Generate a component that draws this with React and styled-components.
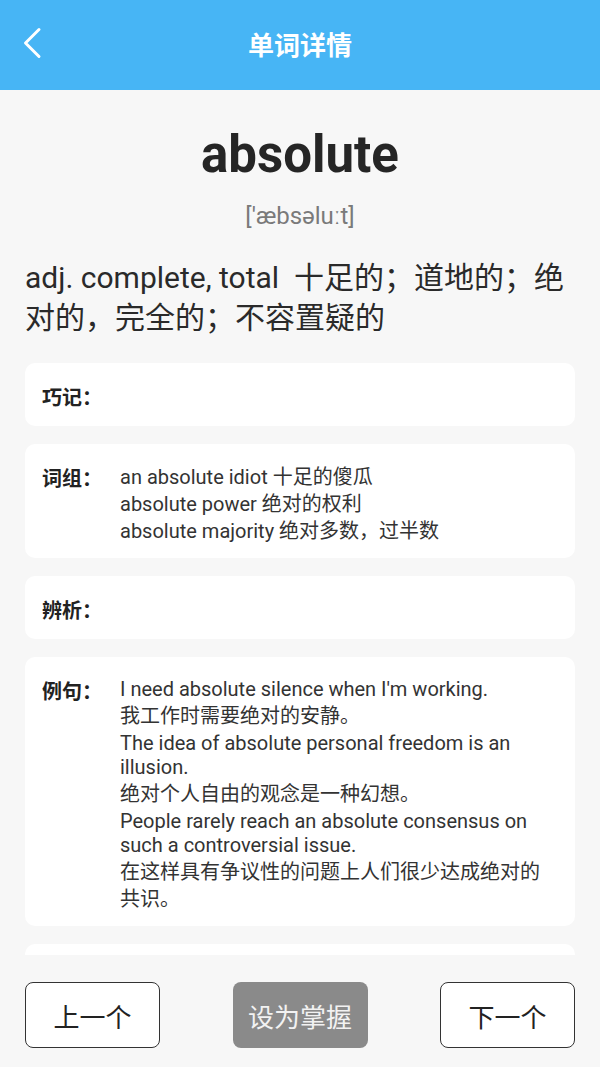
import React from 'react';
import styled, { createGlobalStyle } from 'styled-components';

const GlobalStyle = createGlobalStyle`
  html, body {
    margin: 0;
    padding: 0;
    background: #f7f7f7;
  }
  body {
    font-family: Roboto, "Noto Sans CJK SC", sans-serif;
    color: #333;
  }
  * { box-sizing: border-box; }
`;

const Page = styled.div`
  height: 1067px;
  display: flex;
  flex-direction: column;
  background: #f7f7f7;
`;

const Header = styled.header`
  height: 90px;
  flex-shrink: 0;
  background: #47b5f5;
  display: grid;
  grid-template-columns: 1fr auto 1fr;
  align-items: center;
  padding: 0 22px 4px;
`;

const BackButton = styled.button`
  justify-self: start;
  background: none;
  border: none;
  padding: 0;
  width: 30px;
  height: 40px;
  display: flex;
  align-items: center;
  cursor: pointer;
`;

const Title = styled.h1`
  margin: 0;
  font-size: 26px;
  font-weight: 700;
  color: #fff;
`;

const Scroll = styled.main`
  flex: 1;
  overflow: hidden;
  padding: 0 25px;
`;

const Word = styled.h2`
  margin: 35px 0 0;
  text-align: center;
  font-size: 51px;
  line-height: 60px;
  font-weight: 700;
  color: #252525;
`;

const Phonetic = styled.div`
  margin-top: 16px;
  text-align: center;
  font-size: 24px;
  line-height: 30px;
  color: #7a7a7a;
`;

const Definition = styled.p`
  margin: 27px 0 25px;
  font-size: 30px;
  line-height: 40px;
  color: #2a2a2a;
`;

const Cards = styled.div`
  display: flex;
  flex-direction: column;
  gap: 18px;
`;

const Card = styled.section`
  background: #fff;
  border-radius: 10px;
  padding: 20px 17px 13px;
  min-height: 63px;
  display: flex;
  align-items: flex-start;
`;

const Label = styled.div`
  width: 78px;
  flex-shrink: 0;
  font-size: 20px;
  line-height: 30px;
  font-weight: 700;
  color: #222;
`;

const Body = styled.div`
  flex: 1;
  min-width: 0;
  display: flex;
  flex-direction: column;
  gap: ${(p) => p.$gap || 0}px;
  font-size: 20px;
  color: #333;
`;

const Line = styled.div`
  line-height: ${(p) => (p.$cn ? 27 : 24)}px;
`;

const Phrase = styled.div`
  line-height: 27px;
`;

const Footer = styled.footer`
  height: 112px;
  flex-shrink: 0;
  display: flex;
  justify-content: space-between;
  align-items: flex-start;
  padding: 27px 25px 0;
`;

const NavButton = styled.button`
  width: 135px;
  height: 66px;
  border-radius: 8px;
  font-family: Roboto, "Noto Sans CJK SC", sans-serif;
  font-size: 26px;
  cursor: pointer;
  border: ${(p) => (p.$filled ? 'none' : '1px solid #333')};
  background: ${(p) => (p.$filled ? '#8a8a8a' : '#fff')};
  color: ${(p) => (p.$filled ? '#f2f2f2' : '#222')};
`;

const phrases = [
  'an absolute idiot 十足的傻瓜',
  'absolute power 绝对的权利',
  'absolute majority 绝对多数，过半数',
];

const examples = [
  ['I need absolute silence when I\'m working.', '我工作时需要绝对的安静。'],
  ['The idea of absolute personal freedom is an illusion.', '绝对个人自由的观念是一种幻想。'],
  ['People rarely reach an absolute consensus on such a controversial issue.', '在这样具有争议性的问题上人们很少达成绝对的共识。'],
];

const BackIcon = () => (
  <svg width="20" height="32" viewBox="0 0 20 32" fill="none">
    <path d="M17 2.5 L3.5 16 L17 29.5" stroke="#fff" strokeWidth="3" strokeLinecap="round" strokeLinejoin="round" />
  </svg>
);

export default function App() {
  return (
    <>
      <GlobalStyle />
      <Page>
        <Header>
          <BackButton aria-label="back">
            <BackIcon />
          </BackButton>
          <Title>单词详情</Title>
          <span />
        </Header>

        <Scroll>
          <Word>absolute</Word>
          <Phonetic>['æbsəluːt]</Phonetic>
          <Definition>adj. complete, total&nbsp; 十足的；道地的；绝对的，完全的；不容置疑的</Definition>

          <Cards>
            <Card>
              <Label>巧记：</Label>
              <Body />
            </Card>

            <Card>
              <Label>词组：</Label>
              <Body>
                {phrases.map((p) => (
                  <Phrase key={p}>{p}</Phrase>
                ))}
              </Body>
            </Card>

            <Card>
              <Label>辨析：</Label>
              <Body />
            </Card>

            <Card>
              <Label>例句：</Label>
              <Body $gap={1.5}>
                {examples.map(([en, cn]) => (
                  <React.Fragment key={en}>
                    <Line>{en}</Line>
                    <Line $cn>{cn}</Line>
                  </React.Fragment>
                ))}
              </Body>
            </Card>

            {/* next card, scrolled below the fold */}
            <Card />
          </Cards>
        </Scroll>

        <Footer>
          <NavButton>上一个</NavButton>
          <NavButton $filled>设为掌握</NavButton>
          <NavButton>下一个</NavButton>
        </Footer>
      </Page>
    </>
  );
}
